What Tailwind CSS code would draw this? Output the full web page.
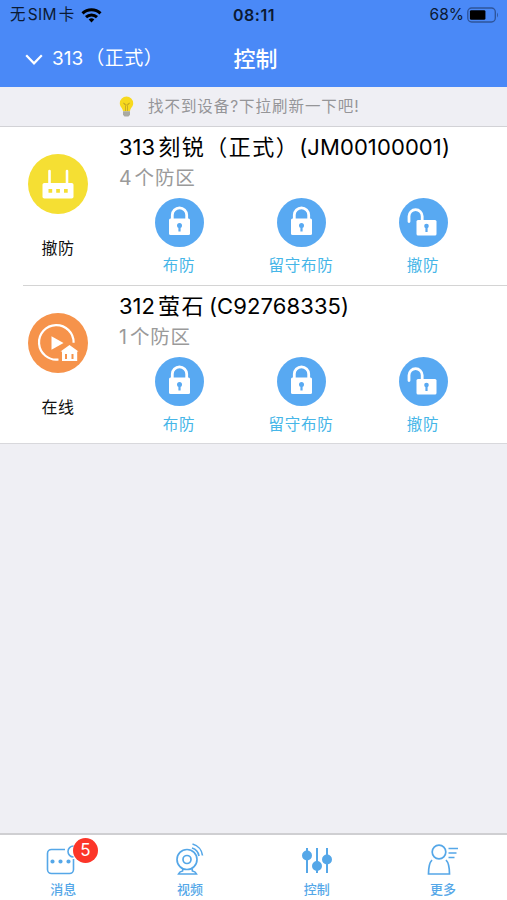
<!DOCTYPE html>
<html lang="zh-CN">
<head>
  <meta charset="UTF-8" />
  <meta name="viewport" content="width=device-width, initial-scale=1.0" />
  <title>控制</title>
  <script src="https://cdn.jsdelivr.net/npm/@tailwindcss/browser@4"></script>
</head>
<body class="bg-[#efeff4] font-['Inter','Noto_Sans_CJK_SC',sans-serif]">
  <!-- Shared icons -->
  <svg class="hidden">
    <symbol id="lock" viewBox="0 0 49 49">
      <circle cx="24.5" cy="24.5" r="24.5" fill="#58a9f2" />
      <path d="M17.300 21.500V17a7.200 7.200 0 0 1 14.400 0v4.500" fill="none" stroke="#fff" stroke-width="2.800" />
      <rect x="14" y="20.500" width="21" height="16.500" rx="1.500" fill="#fff" />
      <circle cx="24.500" cy="27.500" r="2.500" fill="#58a9f2" />
      <path d="M24.500 28v5.500" stroke="#58a9f2" stroke-width="2.200" />
    </symbol>
    <symbol id="unlock" viewBox="0 0 49 49">
      <circle cx="24.500" cy="24.500" r="24.500" fill="#58a9f2" />
      <path d="M10 23.500V18.300a6.600 6.600 0 0 1 13.200 0v4" fill="none" stroke="#fff" stroke-width="2.800" stroke-linecap="round" />
      <rect x="17.500" y="22" width="20" height="15.500" rx="1.500" fill="#fff" />
      <circle cx="27.500" cy="28" r="2.300" fill="#58a9f2" />
      <path d="M27.500 28.500v5.500" stroke="#58a9f2" stroke-width="2.200" />
    </symbol>
  </svg>

  <div class="w-[507px] h-[900px] flex flex-col overflow-hidden">
    <!-- Header -->
    <header class="bg-[#4a89f7] h-[87px] shrink-0">
      <div class="h-[30px] grid grid-cols-3 items-center pl-2.5 pr-2 text-[#0b1a33]">
        <div class="flex items-center">
          <span class="text-[15.500px] tracking-[0.3px] whitespace-nowrap">无<span class="mx-0.5">SIM</span>卡</span>
          <svg class="ml-1.5 w-[21px] h-[15px]" viewBox="0 0 21 15" fill="none" stroke="#000" stroke-width="3">
            <path d="M1.500 5.300a13 13 0 0 1 18 0" />
            <path d="M5 9.100a8 8 0 0 1 11 0" />
            <path d="M10.500 14.500l-2.800-2.900a4 4 0 0 1 5.600 0z" fill="#000" stroke="none" />
          </svg>
        </div>
        <span class="pr-px text-center text-[16px] font-semibold tracking-[0.5px]">08:11</span>
        <div class="flex items-center justify-end">
          <span class="text-[15.500px]">68%</span>
          <svg class="ml-[3px] w-[32px] h-[16px]" viewBox="0 0 33 16">
            <rect x="0.800" y="0.800" width="28.400" height="14.400" rx="4" fill="none" stroke="#2f559b" stroke-width="1.400" />
            <rect x="3" y="3" width="16" height="10" rx="1.500" fill="#000" />
            <path d="M31 5.500q2 2.500 0 5z" fill="#2f559b" />
          </svg>
        </div>
      </div>
      <nav class="h-[57px] grid grid-cols-3 items-center text-white">
        <div class="flex items-center pl-[25px] pt-px whitespace-nowrap">
          <svg class="w-[18px] h-[11px]" viewBox="0 0 18 11" fill="none" stroke="#fff" stroke-width="2.200">
            <path d="M1.200 1.200L9 9.300l7.800-8.100" />
          </svg>
          <span class="ml-[9px] text-[19px]">313</span>
          <span class="ml-0.5 text-[19px] tracking-[0.5px]">（正式）</span>
        </div>
        <h1 class="pl-1 pt-px text-center text-[22px] font-medium">控制</h1>
      </nav>
    </header>

    <!-- Refresh hint -->
    <div class="h-[40px] shrink-0 flex items-center pl-[119px] border-b border-[#d2d2d6] text-[15.500px] text-[#959598]">
      <svg class="w-[15px] h-[21px]" viewBox="0 0 15 21">
        <path d="M7.500 0.500a6.700 6.700 0 0 1 6.700 6.700c0 3.500-2.800 4.500-3.200 8H4c-.4-3.500-3.200-4.500-3.200-8A6.700 6.700 0 0 1 7.500.500z" fill="#f7d91e" />
        <path d="M4.500 7l2 2.500v5.500M10.500 7l-2 2.500v5.500M4.500 7l3 2 3-2" fill="none" stroke="#c6a822" stroke-width="0.900" />
        <path d="M4 15.200h7v3.500L9.500 20.500h-4L4 18.700z" fill="#a9a9a2" />
      </svg>
      <span class="ml-3.5 pt-px tracking-[0.95px]">找不到设备?下拉刷新一下吧!</span>
    </div>

    <!-- Device list -->
    <main class="bg-white shrink-0 border-b border-[#d8d8dc]">
      <section class="h-[158px] flex">
        <div class="w-[119px] pr-[3px] pt-[27px] flex flex-col items-center">
          <svg class="w-[60px] h-[60px]" viewBox="0 0 60 60">
            <circle cx="30" cy="30" r="30" fill="#f5df33" />
            <path d="M21.500 17v14M39 17v14" stroke="#fff" stroke-width="2.600" stroke-linecap="round" />
            <rect x="14.500" y="29" width="31" height="15.500" rx="1.800" fill="#fff" />
            <path d="M20.500 35h3.700v3.700h-3.700zM28.200 35h3.700v3.700h-3.700zM36 35h3.700v3.700h-3.700z" fill="#f5df33" />
          </svg>
          <span class="mt-[22px] leading-6 text-[16px] tracking-[0.5px] text-[#111]">撤防</span>
        </div>
        <div class="flex-1 pt-1 whitespace-nowrap">
          <h2 class="leading-8 text-[22px] text-black"><span>313</span><span class="ml-[3px] tracking-[1.500px]">刻锐（正式）</span><span class="tracking-[0.1px]">(JM00100001)</span></h2>
          <p class="pt-px leading-7 text-[19.500px] text-[#9a9a9a]"><span>4</span><span class="ml-[3px] tracking-[0.8px]">个防区</span></p>
          <div class="-ml-px mt-1.5 grid grid-cols-[122px_122px_122px] text-center leading-6 text-[15.500px] tracking-[0.8px] text-[#46b6e8]">
            <div><svg class="mx-auto mb-[7px] w-[49px] h-[49px]"><use href="#lock" /></svg>布防</div>
            <div><svg class="mx-auto mb-[7px] w-[49px] h-[49px]"><use href="#lock" /></svg>留守布防</div>
            <div><svg class="mx-auto mb-[7px] w-[49px] h-[49px]"><use href="#unlock" /></svg>撤防</div>
          </div>
        </div>
      </section>

      <div class="ml-[23px] h-px bg-[#d4d4d4]"></div>

      <section class="h-[157px] flex">
        <div class="w-[119px] pr-[3px] pt-[27px] flex flex-col items-center">
          <svg class="w-[60px] h-[60px]" viewBox="0 0 60 60">
            <circle cx="30" cy="30" r="30" fill="#f6934b" />
            <path d="M30.500 46.500A17.300 17.300 0 1 1 45.600 29.800" fill="none" stroke="#fff" stroke-width="2.200" />
            <path d="M23.500 23.200v13.600L35.500 30z" fill="#fff" />
            <path d="M32.500 38.500L41.500 32l9 6.500h-1.300v9.500H34v-9.500z" fill="#fff" />
            <path d="M38 41v5M44.500 41v5" stroke="#f6934b" stroke-width="2" />
          </svg>
          <span class="mt-[22px] leading-6 text-[16px] tracking-[0.5px] text-[#111]">在线</span>
        </div>
        <div class="flex-1 pt-1 whitespace-nowrap">
          <h2 class="leading-8 text-[22px] text-black"><span>312</span><span class="ml-[3px] tracking-[1.500px]">萤石</span><span class="ml-1 tracking-[0.1px]">(C92768335)</span></h2>
          <p class="pt-px leading-7 text-[19.500px] text-[#9a9a9a]"><span>1</span><span class="ml-[3px] tracking-[0.8px]">个防区</span></p>
          <div class="-ml-px mt-1.5 grid grid-cols-[122px_122px_122px] text-center leading-6 text-[15.500px] tracking-[0.8px] text-[#46b6e8]">
            <div><svg class="mx-auto mb-[7px] w-[49px] h-[49px]"><use href="#lock" /></svg>布防</div>
            <div><svg class="mx-auto mb-[7px] w-[49px] h-[49px]"><use href="#lock" /></svg>留守布防</div>
            <div><svg class="mx-auto mb-[7px] w-[49px] h-[49px]"><use href="#unlock" /></svg>撤防</div>
          </div>
        </div>
      </section>
    </main>

    <!-- Tab bar -->
    <footer class="mt-auto h-[67px] shrink-0 bg-white border-t-2 border-[#cfcfd2] grid grid-cols-4 text-center text-[13px] font-medium leading-5 text-[#55a7e8]">
      <a class="relative pt-[7px]">
        <svg class="mx-auto mb-[3px] w-[34px] h-[34px]" viewBox="0 0 34 34" fill="none" stroke="#55a7e8" stroke-width="1.600">
          <path d="M19 7.500H5.500a4 4 0 0 0-4 4v16a4 4 0 0 0 4 4h18a4 4 0 0 0 4-4V17" />
          <path d="M27.500 4a5.500 5.500 0 0 0 0 11" />
          <path d="M6.500 19.500h.01M14.500 19.500h.01M22.500 19.500h.01" stroke-width="4.200" stroke-linecap="round" />
        </svg>
        <span class="absolute left-[73px] top-[3px] w-[25px] h-[25px] rounded-full bg-[#fc3529] text-white text-[17px] font-normal leading-[25px]">5</span>
        消息
      </a>
      <a class="pt-[7px]">
        <svg class="mx-auto mb-[3px] w-[34px] h-[34px]" viewBox="0 0 34 34" fill="none" stroke="#55a7e8" stroke-width="1.700">
          <circle cx="14" cy="17.500" r="10" />
          <circle cx="14" cy="17.500" r="4" />
          <path d="M10 27l-.5 2q-3 .5-4 3h18q-1-2.500-4-3l-.5-2" />
          <path d="M19 6a10 10 0 0 1 7 8M19.500 2a13.500 13.500 0 0 1 10 11.500" />
        </svg>
        视频
      </a>
      <a class="pt-[7px]">
        <svg class="mx-auto mb-[3px] w-[34px] h-[34px]" viewBox="0 0 34 34" fill="#55a7e8" stroke="#55a7e8" stroke-width="2">
          <path d="M7 6v25M17 6v25M27 6v25" />
          <circle cx="7" cy="13.500" r="4" />
          <circle cx="17" cy="24" r="4" />
          <circle cx="27" cy="17.500" r="4" />
        </svg>
        控制
      </a>
      <a class="pt-[7px] pr-px">
        <svg class="mx-auto mb-[3px] w-[34px] h-[34px]" viewBox="0 0 34 34" fill="none" stroke="#55a7e8" stroke-width="1.700">
          <circle cx="13" cy="10" r="6.800" />
          <path d="M6 18c-3 3-3.500 7-3.500 14h21c0-7-.5-11-3.500-14" />
          <path d="M22.500 6.500H32M22.500 11h8M22.500 15.500h6" />
        </svg>
        更多
      </a>
    </footer>
  </div>
</body>
</html>
